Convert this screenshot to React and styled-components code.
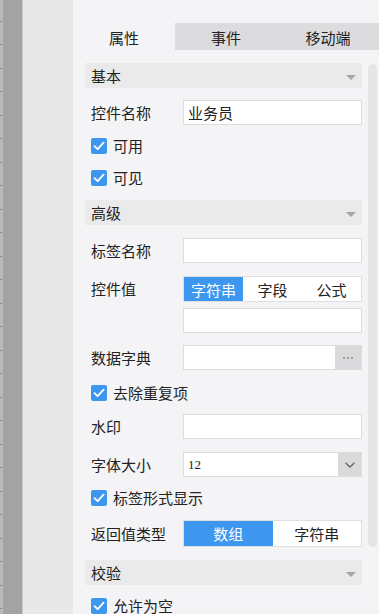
import React from 'react';
import styled, { createGlobalStyle } from 'styled-components';

const Global = createGlobalStyle`
  html, body { margin: 0; padding: 0; }
  body {
    font-family: "Noto Sans CJK SC", "Noto Sans", sans-serif;
    color: #222;
    background: #f4f4f6;
  }
`;

const Page = styled.div`
  display: flex;
  width: 379px;
  height: 614px;
  overflow: hidden;
`;

const Ruler = styled.div`
  flex: none;
  width: 22px;
  border-right: 1px solid #c9c9c9;
  background:
    repeating-linear-gradient(to bottom, transparent 0 21px, #8a8a8a 21px 22px, transparent 22px 23.5px) 0 0 / 2px 100% no-repeat,
    linear-gradient(to right, #bababa 0 3px, #a3a3a3 3px);
`;

const Gutter = styled.div`
  flex: none;
  width: 50px;
  background: #e8e8e8;
`;

const Panel = styled.div`
  flex: 1;
  display: flex;
  flex-direction: column;
  padding-top: 23px;
  background: #f4f4f6;
`;

const Tabs = styled.div`
  display: grid;
  grid-template-columns: 102px 102px 102px;
  height: 30px;
`;

const Tab = styled.div`
  display: flex;
  align-items: center;
  justify-content: center;
  font-size: 15px;
  padding-top: 1px;
  background: ${p => (p.$active ? '#f4f4f6' : '#dcdcdf')};
`;

const Body = styled.div`
  display: flex;
  align-items: flex-start;
`;

const Content = styled.div`
  width: 277px;
  margin-left: 12px;
  display: flex;
  flex-direction: column;
`;

const Scrollbar = styled.div`
  flex: none;
  width: 9px;
  height: 483px;
  margin: 14px 0 0 6px;
  border-radius: 5px;
  background: #e5e5e7;
`;

const Header = styled.div`
  height: 25px;
  margin-top: ${p => p.$mt}px;
  padding: 0 6px;
  display: flex;
  align-items: center;
  justify-content: space-between;
  background: #eaeaea;
  font-size: 15px;
  line-height: 25px;
`;

const Caret = styled.span`
  width: 0;
  height: 0;
  border-left: 5px solid transparent;
  border-right: 5px solid transparent;
  border-top: 5px solid #a6a6a6;
  margin-top: 3px;
`;

const Field = styled.div`
  display: flex;
  align-items: ${p => (p.$top ? 'flex-start' : 'center')};
  margin-top: ${p => p.$mt}px;
`;

const Label = styled.div`
  flex: none;
  width: 98px;
  padding-left: 6px;
  box-sizing: border-box;
  font-size: 15px;
  line-height: 19px;
  padding-top: ${p => (p.$top ? 3 : 0)}px;
`;

const Stack = styled.div`
  flex: 1 1 auto;
  display: flex;
  flex-direction: column;
  gap: 6px;
`;

const Input = styled.div`
  flex: 1 1 auto;
  min-width: 0;
  height: 25px;
  box-sizing: border-box;
  border: 1px solid #dcdcdc;
  background: #fff;
  padding: 0 4px;
  font-size: 15px;
  line-height: 23px;
`;

const Combo = styled.div`
  flex: 1 1 auto;
  display: flex;
  height: 25px;
  box-sizing: border-box;
  border: 1px solid #dcdcdc;
  background: #fff;
`;

const ComboText = styled.div`
  flex: 1;
  padding: 0 4px;
  font-family: ${p => (p.$serif ? '"Liberation Serif", serif' : 'inherit')};
  font-size: ${p => (p.$serif ? 13 : 15)}px;
  line-height: 23px;
`;

const ComboButton = styled.div`
  flex: none;
  width: ${p => p.$w}px;
  display: flex;
  align-items: center;
  justify-content: center;
  background: #dadadc;
`;

const CheckRow = styled.div`
  display: flex;
  align-items: center;
  gap: 6px;
  height: 16px;
  padding-left: 6px;
  margin-top: ${p => p.$mt}px;
  font-size: 15px;
  line-height: 16px;
`;

const Box = styled.span`
  flex: none;
  width: 16px;
  height: 16px;
  border-radius: 2px;
  background: #3d97ef;
  display: flex;
  align-items: center;
  justify-content: center;
`;

const Segmented = styled.div`
  flex: 1 1 auto;
  display: flex;
  height: ${p => p.$h}px;
  box-sizing: border-box;
  border: 1px solid #dfdfdf;
  background: #fff;
`;

const Seg = styled.div`
  flex: 1;
  display: flex;
  align-items: center;
  justify-content: center;
  font-size: 15px;
  background: ${p => (p.$active ? '#3d97ef' : '#fff')};
  color: ${p => (p.$active ? '#fff' : '#222')};
`;

const Check = ({ children, mt }) => (
  <CheckRow $mt={mt}>
    <Box>
      <svg width="12" height="10" viewBox="0 0 12 10">
        <path d="M1.5 5.2 L4.6 8.2 L10.6 1.6" fill="none" stroke="#fff" strokeWidth="1.8" strokeLinecap="round" strokeLinejoin="round" />
      </svg>
    </Box>
    {children}
  </CheckRow>
);

export default function App() {
  return (
    <>
      <Global />
      <Page>
        <Ruler />
        <Gutter />
        <Panel>
          <Tabs>
            <Tab $active>属性</Tab>
            <Tab>事件</Tab>
            <Tab>移动端</Tab>
          </Tabs>
          <Body>
            <Content>
              <Header $mt={13}>基本<Caret /></Header>
              <Field $mt={12}>
                <Label>控件名称</Label>
                <Input>业务员</Input>
              </Field>
              <Check mt={13}>可用</Check>
              <Check mt={16}>可见</Check>
              <Header $mt={14}>高级<Caret /></Header>
              <Field $mt={13}>
                <Label>标签名称</Label>
                <Input />
              </Field>
              <Field $mt={13} $top>
                <Label $top>控件值</Label>
                <Stack>
                  <Segmented $h={26}>
                    <Seg $active>字符串</Seg>
                    <Seg>字段</Seg>
                    <Seg>公式</Seg>
                  </Segmented>
                  <Input />
                </Stack>
              </Field>
              <Field $mt={12}>
                <Label>数据字典</Label>
                <Combo>
                  <ComboText />
                  <ComboButton $w={26}>
                    <svg width="12" height="4" viewBox="0 0 12 4">
                      <circle cx="2" cy="2" r="1" fill="#8a8a8a" />
                      <circle cx="6" cy="2" r="1" fill="#8a8a8a" />
                      <circle cx="10" cy="2" r="1" fill="#8a8a8a" />
                    </svg>
                  </ComboButton>
                </Combo>
              </Field>
              <Check mt={15}>去除重复项</Check>
              <Field $mt={13}>
                <Label>水印</Label>
                <Input />
              </Field>
              <Field $mt={13}>
                <Label>字体大小</Label>
                <Combo>
                  <ComboText $serif>12</ComboText>
                  <ComboButton $w={23}>
                    <svg width="12" height="8" viewBox="0 0 12 8">
                      <path d="M1.5 1.8 L6 6 L10.5 1.8" fill="none" stroke="#666" strokeWidth="1.3" />
                    </svg>
                  </ComboButton>
                </Combo>
              </Field>
              <Check mt={13}>标签形式显示</Check>
              <Field $mt={14}>
                <Label>返回值类型</Label>
                <Segmented $h={27}>
                  <Seg $active>数组</Seg>
                  <Seg>字符串</Seg>
                </Segmented>
              </Field>
              <Header $mt={13}>校验<Caret /></Header>
              <Check mt={13}>允许为空</Check>
            </Content>
            <Scrollbar />
          </Body>
        </Panel>
      </Page>
    </>
  );
}
